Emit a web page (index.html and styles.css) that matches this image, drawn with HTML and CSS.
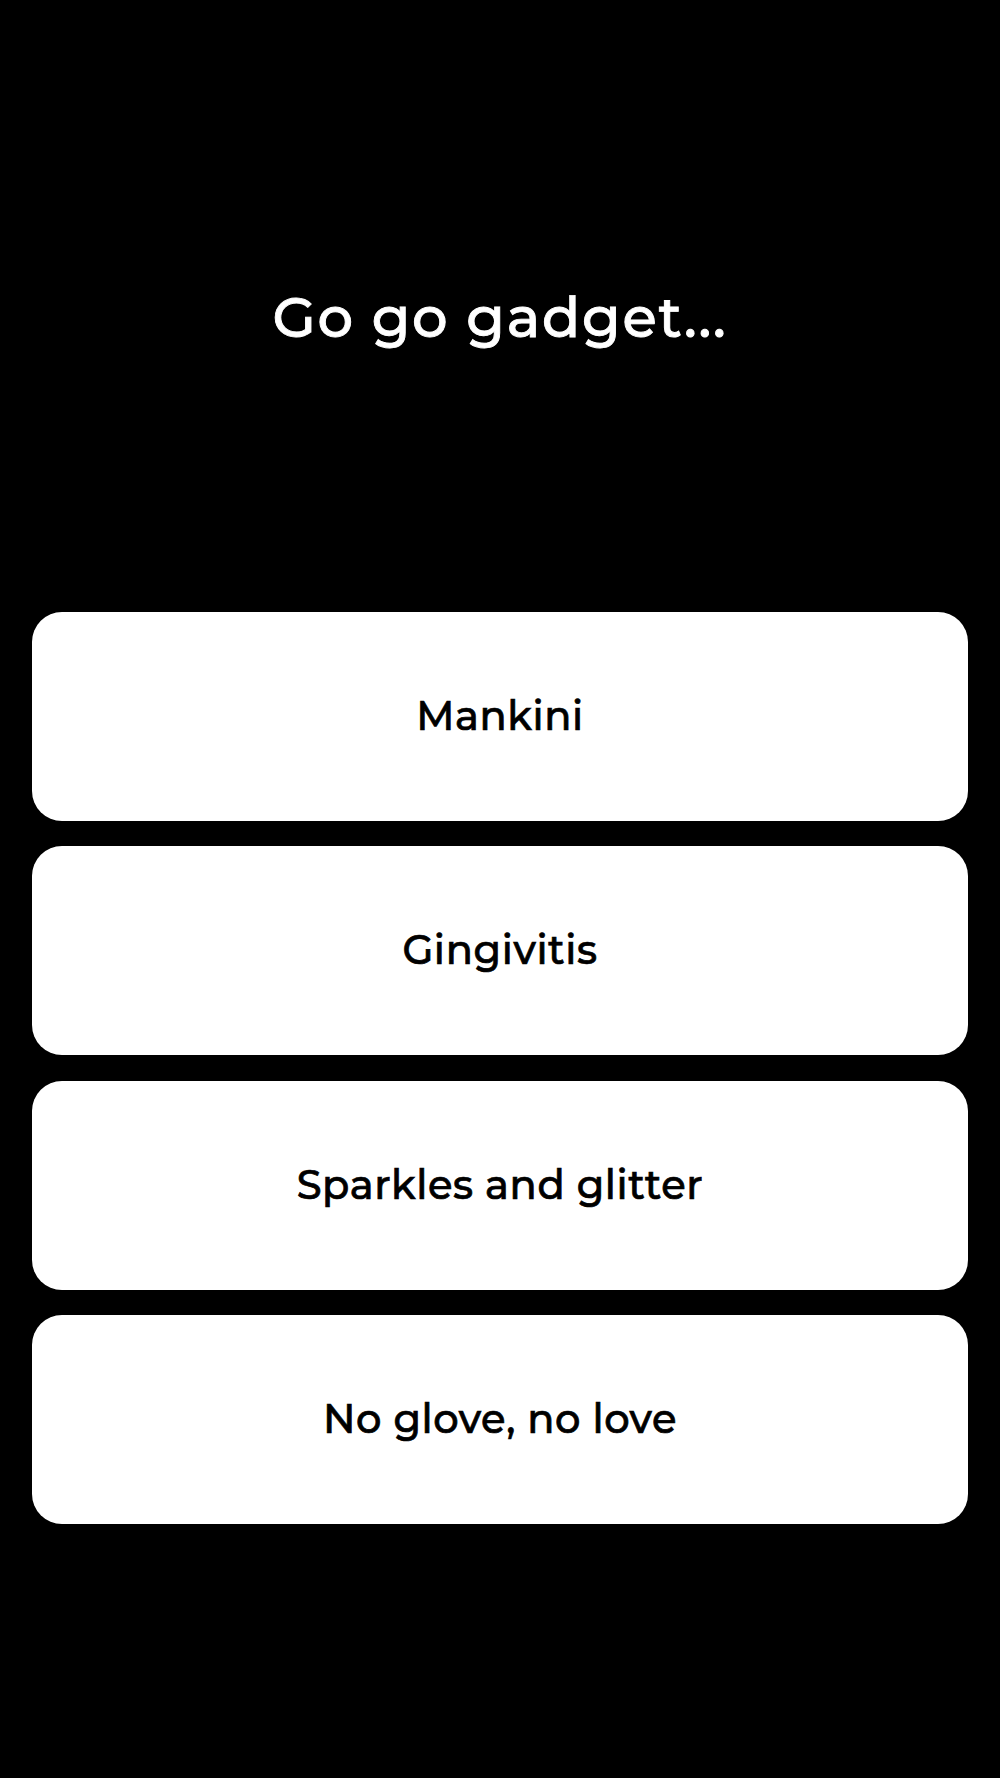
FILE: index.html
```html
<!DOCTYPE html>
<html lang="en">
<head>
<meta charset="utf-8">
<title>Go go gadget...</title>
<link rel="stylesheet" href="styles.css">
</head>
<body>
<main class="screen">
  <header class="question">
    <h1 class="question-title">Go go gadget...</h1>
  </header>
  <section class="answers">
    <button class="answer">Mankini</button>
    <button class="answer">Gingivitis</button>
    <button class="answer">Sparkles and glitter</button>
    <button class="answer">No glove, no love</button>
  </section>
</main>
</body>
</html>
```

FILE: styles.css
```css
html, body {
  margin: 0;
  padding: 0;
  background: #000;
}

.screen {
  width: 1000px;
  height: 1778px;
  background: #000;
  display: flex;
  flex-direction: column;
  font-family: "Montserrat", "Open Sans", "DejaVu Sans", sans-serif;
}

.question {
  height: 612px;
  box-sizing: border-box;
  padding-top: 285px;
}

.question-title {
  margin: 0;
  color: #fff;
  text-align: center;
  font-size: 56px;
  line-height: 64px;
  font-weight: 500;
  letter-spacing: 1.8px;
  -webkit-text-stroke: 0.9px #fff;
}

.answers {
  display: flex;
  flex-direction: column;
  gap: 25.3px;
  padding: 0 32px;
}

.answer {
  height: 209px;
  border: none;
  border-radius: 30px;
  background: #fff;
  color: #000;
  font-family: inherit;
  font-size: 40px;
  font-weight: 500;
  letter-spacing: 0.6px;
  -webkit-text-stroke: 0.7px #000;
  padding: 0 0 2px;
  display: flex;
  align-items: center;
  justify-content: center;
}
```
